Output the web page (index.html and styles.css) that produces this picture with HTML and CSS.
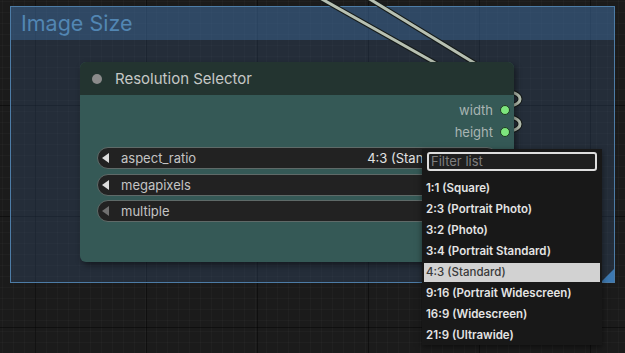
FILE: index.html
```html
<!DOCTYPE html>
<html lang="en">
<head>
  <meta charset="utf-8">
  <title>Image Size</title>
  <link rel="stylesheet" href="styles.css">
</head>
<body>
  <div class="canvas">

    <div class="group">
      <div class="group-title">Image Size</div>
      <div class="group-body"></div>
      <div class="group-resize"></div>
    </div>

    <!-- links running behind the node -->
    <svg class="links" width="625" height="353" viewBox="0 0 625 353">
      <g class="link-outline">
        <path d="M320,-2 L437,64"/>
        <path d="M368,-2 L476,64"/>
        <path d="M511,92 C523,95 523,103 511,106"/>
        <path d="M511,117 C523,120 523,128 511,131"/>
      </g>
      <g class="link-line">
        <path d="M320,-2 L437,64"/>
        <path d="M368,-2 L476,64"/>
        <path d="M511,92 C523,95 523,103 511,106"/>
        <path d="M511,117 C523,120 523,128 511,131"/>
      </g>
    </svg>

    <div class="node">
      <div class="node-header">
        <span class="node-dot"></span>
        <span class="node-title">Resolution Selector</span>
      </div>
      <div class="node-body">
        <div class="outputs">
          <div class="output"><span>width</span><span class="slot"></span></div>
          <div class="output"><span>height</span><span class="slot"></span></div>
        </div>
        <div class="widgets">
          <div class="widget">
            <span class="arrow"></span>
            <span class="w-label">aspect_ratio</span>
            <span class="w-value">4:3 (Standard)</span>
          </div>
          <div class="widget">
            <span class="arrow"></span>
            <span class="w-label">megapixels</span>
          </div>
          <div class="widget">
            <span class="arrow arrow-off"></span>
            <span class="w-label">multiple</span>
          </div>
        </div>
      </div>
    </div>

    <div class="menu">
      <div class="filter">Filter list</div>
      <div class="menu-items">
        <div class="item">1:1 (Square)</div>
        <div class="item">2:3 (Portrait Photo)</div>
        <div class="item">3:2 (Photo)</div>
        <div class="item">3:4 (Portrait Standard)</div>
        <div class="item selected">4:3 (Standard)</div>
        <div class="item">9:16 (Portrait Widescreen)</div>
        <div class="item">16:9 (Widescreen)</div>
        <div class="item">21:9 (Ultrawide)</div>
      </div>
    </div>

  </div>
</body>
</html>
```

FILE: styles.css
```css
body {
  margin: 0;
  background-color: #1b1b1b;
  font-family: Inter, "Liberation Sans", sans-serif;
}

.canvas {
  position: relative;
  width: 625px;
  height: 353px;
  overflow: hidden;
  background-color: #1b1b1b;
  background-image:
    linear-gradient(90deg, rgba(0,0,0,0.45) 1px, transparent 1px),
    linear-gradient(0deg, rgba(0,0,0,0.45) 1px, transparent 1px),
    linear-gradient(90deg, rgba(255,255,255,0.025) 1px, transparent 1px),
    linear-gradient(0deg, rgba(255,255,255,0.025) 1px, transparent 1px);
  background-size: 111px 111px, 111px 111px, 11px 11px, 11px 11px;
  background-position: 35px 0, 0 -5px, 2px 0, 0 2px;
}

/* group */
.group {
  position: absolute;
  left: 10px;
  top: 6px;
  width: 603px;
  height: 275px;
  border: 1px solid #4d7ca6;
  display: flex;
  flex-direction: column;
}
.group-title {
  height: 33px;
  padding-left: 10px;
  background-color: rgba(60, 100, 145, 0.62);
  color: #5286b3;
  font-size: 21.5px;
  line-height: 33px;
}
.group-body {
  flex: 1;
  background-color: rgba(55, 85, 120, 0.32);
}
.group-resize {
  position: absolute;
  right: 0;
  bottom: 0;
  width: 0;
  height: 0;
  border-left: 13px solid transparent;
  border-bottom: 13px solid #3d78b0;
}

/* links */
.links {
  position: absolute;
  left: 0;
  top: 0;
}
.link-outline path {
  fill: none;
  stroke: #151a18;
  stroke-width: 5;
}
.link-line path {
  fill: none;
  stroke: #b7c0b2;
  stroke-width: 3;
}

/* node */
.node {
  position: absolute;
  left: 80px;
  top: 62px;
  width: 434px;
  height: 200px;
  border-radius: 6px;
  overflow: hidden;
  background-color: #355956;
  box-shadow: 2px 3px 6px rgba(0,0,0,0.45);
  display: flex;
  flex-direction: column;
}
.node-header {
  height: 33px;
  flex: none;
  background-color: #233430;
  display: flex;
  align-items: center;
  padding-left: 12px;
}
.node-dot {
  width: 10px;
  height: 10px;
  border-radius: 50%;
  background-color: #8b8b8b;
}
.node-title {
  margin-left: 13px;
  color: #c6c8c6;
  font-size: 15px;
}
.node-body {
  padding-top: 4px;
}
.outputs {
  display: flex;
  flex-direction: column;
  align-items: flex-end;
  padding-right: 4px;
}
.output {
  height: 22px;
  display: flex;
  align-items: center;
  gap: 7px;
  color: #a9b5b3;
  font-size: 13px;
}
.slot {
  width: 8px;
  height: 8px;
  border-radius: 50%;
  background-color: #7de57d;
  border: 1px solid #1e3a22;
}
.widgets {
  margin: 4px 16px 0 17px;
  display: flex;
  flex-direction: column;
  gap: 4.5px;
}
.widget {
  height: 20px;
  border: 1px solid #5f6a68;
  border-radius: 11px;
  background-color: #222222;
  display: flex;
  align-items: center;
  padding: 0 41px 0 4px;
  font-size: 13px;
}
.arrow {
  width: 0;
  height: 0;
  border-top: 5px solid transparent;
  border-bottom: 5px solid transparent;
  border-right: 7px solid #dddddd;
}
.arrow-off {
  border-right-color: #707070;
}
.w-label {
  margin-left: 12px;
  color: #c4c4c4;
  flex: 1;
}
.w-value {
  color: #e2e2e2;
}

/* context menu */
.menu {
  position: absolute;
  left: 422px;
  top: 149px;
  width: 180px;
  height: 196px;
  background-color: #181818;
  box-shadow: 0 2px 6px rgba(0,0,0,0.5);
}
.filter {
  margin: 3px 5px 0 5px;
  height: 15px;
  border: 2px solid #dedede;
  border-radius: 3px;
  background-color: #1f1f1f;
  color: #7e7e7e;
  font-size: 13px;
  line-height: 15px;
  padding-left: 2px;
}
.menu-items {
  margin-top: 8px;
  display: flex;
  flex-direction: column;
  gap: 2px;
}
.item {
  height: 19px;
  margin: 0 2px;
  padding-left: 2px;
  color: #e4e4e4;
  font-size: 11.5px;
  font-weight: 600;
  line-height: 19px;
}
.item.selected {
  background-color: #d2d2d2;
  color: #3a3a3a;
  font-weight: 500;
}
```
